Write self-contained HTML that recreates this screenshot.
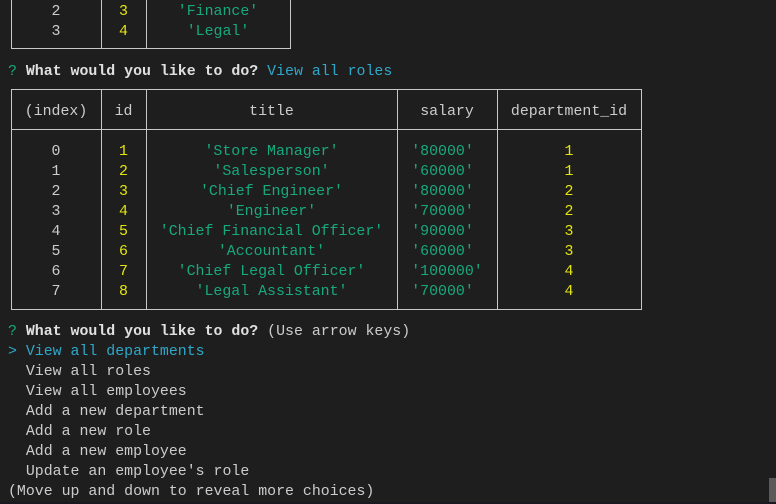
<!DOCTYPE html>
<html><head><style>
body{margin:0;width:776px;height:504px;background:#1e1e1e;overflow:hidden;position:relative;font-family:"Liberation Mono",monospace;font-size:14.9px;color:#cccccc}
.t{position:absolute;height:20px;line-height:20px;white-space:pre;text-align:center;margin-top:2px}
.l{position:absolute;height:20px;line-height:20px;white-space:pre;left:8px;margin-top:2px}
.g{color:#17a97c}.y{color:#e5e510}.c{color:#2fa8c9}.b{font-weight:bold;color:#e0e0e0}
.h{position:absolute;height:1px;background:#c8c8c8}
.v{position:absolute;width:1px;background:#c8c8c8}
</style></head><body>
<div class="v" style="left:11px;top:0;height:49px"></div>
<div class="v" style="left:101px;top:0;height:49px"></div>
<div class="v" style="left:146px;top:0;height:49px"></div>
<div class="v" style="left:290px;top:0;height:49px"></div>
<div class="h" style="left:11px;top:48px;width:280px"></div>
<div class="t" style="left:11px;width:90px;top:0">2</div>
<div class="t y" style="left:101px;width:45px;top:0">3</div>
<div class="t g" style="left:146px;width:144px;top:0">'Finance'</div>
<div class="t" style="left:11px;width:90px;top:20px">3</div>
<div class="t y" style="left:101px;width:45px;top:20px">4</div>
<div class="t g" style="left:146px;width:144px;top:20px">'Legal'</div>

<div class="l" style="top:60px"><span class="g">?</span> <span class="b">What would you like to do?</span> <span class="c">View all roles</span></div>

<div class="h" style="left:11px;top:89px;width:631px"></div>
<div class="h" style="left:11px;top:129px;width:631px"></div>
<div class="h" style="left:11px;top:309px;width:631px"></div>
<div class="v" style="left:11px;top:89px;height:221px"></div>
<div class="v" style="left:101px;top:89px;height:221px"></div>
<div class="v" style="left:146px;top:89px;height:221px"></div>
<div class="v" style="left:397px;top:89px;height:221px"></div>
<div class="v" style="left:497px;top:89px;height:221px"></div>
<div class="v" style="left:641px;top:89px;height:221px"></div>
<div class="t" style="left:11px;width:90px;top:100px">(index)</div>
<div class="t" style="left:101px;width:45px;top:100px">id</div>
<div class="t" style="left:146px;width:251px;top:100px">title</div>
<div class="t" style="left:397px;width:100px;top:100px">salary</div>
<div class="t" style="left:497px;width:144px;top:100px">department_id</div>

<div style="position:absolute;left:0;top:140px">
<div class="t" style="left:11px;width:90px;top:0">0</div><div class="t y" style="left:101px;width:45px;top:0">1</div><div class="t g" style="left:146px;width:251px;top:0">'Store Manager'</div><div class="t g" style="left:397px;width:100px;top:0">'80000' </div><div class="t y" style="left:497px;width:144px;top:0">1</div>
<div class="t" style="left:11px;width:90px;top:20px">1</div><div class="t y" style="left:101px;width:45px;top:20px">2</div><div class="t g" style="left:146px;width:251px;top:20px">'Salesperson'</div><div class="t g" style="left:397px;width:100px;top:20px">'60000' </div><div class="t y" style="left:497px;width:144px;top:20px">1</div>
<div class="t" style="left:11px;width:90px;top:40px">2</div><div class="t y" style="left:101px;width:45px;top:40px">3</div><div class="t g" style="left:146px;width:251px;top:40px">'Chief Engineer'</div><div class="t g" style="left:397px;width:100px;top:40px">'80000' </div><div class="t y" style="left:497px;width:144px;top:40px">2</div>
<div class="t" style="left:11px;width:90px;top:60px">3</div><div class="t y" style="left:101px;width:45px;top:60px">4</div><div class="t g" style="left:146px;width:251px;top:60px">'Engineer'</div><div class="t g" style="left:397px;width:100px;top:60px">'70000' </div><div class="t y" style="left:497px;width:144px;top:60px">2</div>
<div class="t" style="left:11px;width:90px;top:80px">4</div><div class="t y" style="left:101px;width:45px;top:80px">5</div><div class="t g" style="left:146px;width:251px;top:80px">'Chief Financial Officer'</div><div class="t g" style="left:397px;width:100px;top:80px">'90000' </div><div class="t y" style="left:497px;width:144px;top:80px">3</div>
<div class="t" style="left:11px;width:90px;top:100px">5</div><div class="t y" style="left:101px;width:45px;top:100px">6</div><div class="t g" style="left:146px;width:251px;top:100px">'Accountant'</div><div class="t g" style="left:397px;width:100px;top:100px">'60000' </div><div class="t y" style="left:497px;width:144px;top:100px">3</div>
<div class="t" style="left:11px;width:90px;top:120px">6</div><div class="t y" style="left:101px;width:45px;top:120px">7</div><div class="t g" style="left:146px;width:251px;top:120px">'Chief Legal Officer'</div><div class="t g" style="left:397px;width:100px;top:120px">'100000'</div><div class="t y" style="left:497px;width:144px;top:120px">4</div>
<div class="t" style="left:11px;width:90px;top:140px">7</div><div class="t y" style="left:101px;width:45px;top:140px">8</div><div class="t g" style="left:146px;width:251px;top:140px">'Legal Assistant'</div><div class="t g" style="left:397px;width:100px;top:140px">'70000' </div><div class="t y" style="left:497px;width:144px;top:140px">4</div>
</div>

<div class="l" style="top:320px"><span class="g">?</span> <span class="b">What would you like to do?</span> (Use arrow keys)</div>
<div class="l c" style="top:340px">&gt; View all departments</div>
<div class="l" style="top:360px">  View all roles</div>
<div class="l" style="top:380px">  View all employees</div>
<div class="l" style="top:400px">  Add a new department</div>
<div class="l" style="top:420px">  Add a new role</div>
<div class="l" style="top:440px">  Add a new employee</div>
<div class="l" style="top:460px">  Update an employee's role</div>
<div class="l" style="top:480px">(Move up and down to reveal more choices)</div>
<div style="position:absolute;left:769px;top:478px;width:7px;height:24px;background:#5a5a5a"></div>
<div style="position:absolute;left:0;top:502px;width:776px;height:2px;background:#181820"></div>
</body></html>
